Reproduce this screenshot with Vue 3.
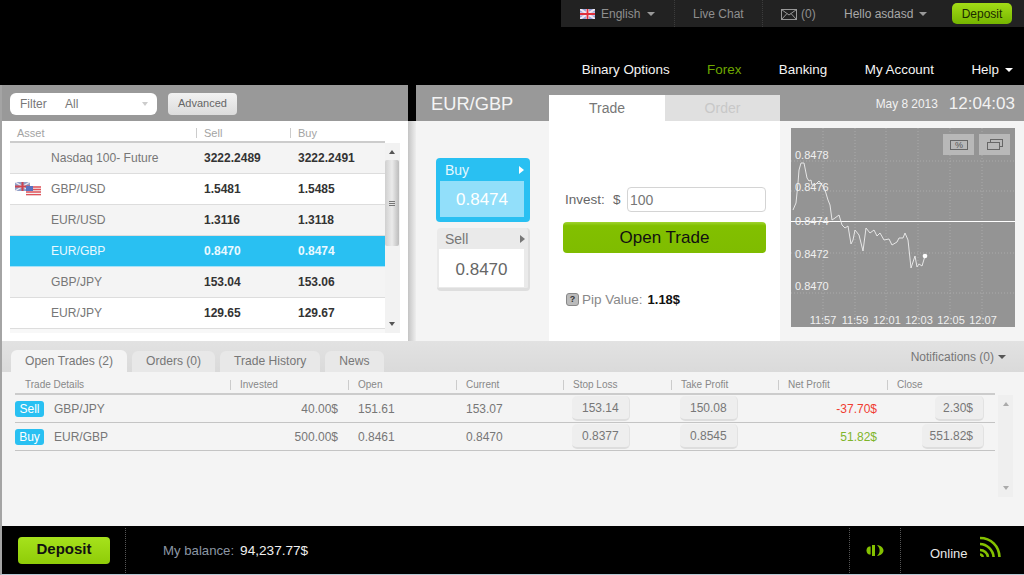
<template>
  <div class="Page">
    <div class="TopRow">
      <div class="TopBar">
        <div class="TopItem LangItem">
          <svg class="FlagUk" width="15" height="10" viewBox="0 0 15 10">
            <rect width="15" height="10" fill="#8f9fd8" />
            <path d="M0 0L15 10M15 0L0 10" stroke="#f2e6ee" stroke-width="2" />
            <path d="M7.5 0V10M0 5H15" stroke="#f2e6ee" stroke-width="3.2" />
            <path d="M7.5 0V10M0 5H15" stroke="#e0303c" stroke-width="1.8" />
          </svg>
          <span>English</span><i class="Caret"></i>
        </div>
        <div class="TopItem ChatItem">Live Chat</div>
        <div class="TopItem MailItem">
          <svg width="16" height="11" viewBox="0 0 16 11" fill="none" stroke="#999">
            <rect x="0.5" y="0.5" width="15" height="10" />
            <path d="M0.5 0.5L8 6L15.5 0.5M0.5 10.5L6 4.5M15.5 10.5L10 4.5" />
          </svg>
          <span>(0)</span>
        </div>
        <div class="TopItem HelloItem"><span>Hello asdasd</span><i class="Caret"></i></div>
        <a href="javascript:;" class="TopDeposit">Deposit</a>
      </div>
    </div>
    <nav class="MainNav">
      <a href="javascript:;" v-for="item in navItems" v-bind:key="item" v-bind:class="{ Active: item == 'Forex' }">{{ item }}</a>
      <a href="javascript:;" class="HelpLink">Help<i class="Caret White"></i></a>
    </nav>

    <div class="Workspace">
      <div class="UpperRow">
        <section class="AssetPanel">
          <div class="FilterBar">
            <div class="FilterBox"><span class="FilterLabel">Filter</span><span>All</span><i class="Caret Pale"></i></div>
            <a href="javascript:;" class="AdvancedBtn">Advanced</a>
          </div>
          <div class="AssetBody">
            <div class="AssetHead">
              <span class="ColName">Asset</span>
              <span class="ColPrice Sep">Sell</span>
              <span class="ColPrice Sep">Buy</span>
            </div>
            <div class="AssetScrollWrap">
              <div class="AssetList">
                <div class="AssetRow" v-for="row in assets" v-bind:key="row.name" v-bind:class="{ Picked: row.name == 'EUR/GBP' }">
                  <span class="ColName">
                    <svg v-if="row.flags" class="PairFlags" width="27" height="14" viewBox="0 0 27 14">
                      <rect x="0" y="0" width="15" height="9" fill="#8f9fc8" />
                      <path d="M0 0L15 9M15 0L0 9" stroke="#f0e8ee" stroke-width="1.4" />
                      <path d="M7.5 0V9M0 4.5H15" stroke="#cc4450" stroke-width="2" />
                      <rect x="11" y="4" width="15" height="10" fill="#f4f0f0" />
                      <path d="M11 5H26M11 7.5H26M11 10H26M11 12.6H26" stroke="#e0525a" stroke-width="1.3" />
                      <rect x="11" y="4" width="7" height="5" fill="#5a72c0" />
                    </svg>
                    {{ row.name }}
                  </span>
                  <span class="ColPrice">{{ row.sell }}</span>
                  <span class="ColPrice">{{ row.buy }}</span>
                </div>
              </div>
              <div class="ScrollTrack">
                <i class="ArrowUp"></i>
                <div class="ScrollThumb"><b></b><b></b><b></b></div>
                <i class="ArrowDown"></i>
              </div>
            </div>
          </div>
        </section>

        <div class="PanelGap"></div>

        <section class="TradePanel">
          <div class="TradeHead">
            <h2 class="PairTitle">EUR/GBP</h2>
            <div class="TradeTabs">
              <a href="javascript:;" class="TradeTab Current">Trade</a>
              <a href="javascript:;" class="TradeTab">Order</a>
            </div>
            <div class="ClockBox"><span class="DateText">May 8 2013</span><span class="TimeText">12:04:03</span></div>
          </div>
          <div class="TradeBody">
            <div class="SideCol">
              <div class="QuoteCard BuyCard">
                <div class="QuoteTop"><span>Buy</span><i class="ArrowRight"></i></div>
                <div class="QuoteVal">0.8474</div>
              </div>
              <div class="QuoteCard SellCard">
                <div class="QuoteTop"><span>Sell</span><i class="ArrowRight"></i></div>
                <div class="QuoteVal">0.8470</div>
              </div>
            </div>
            <div class="FormCol">
              <div class="InvestRow">
                <span class="InvestLabel">Invest:</span><span class="Dollar">$</span>
                <input type="text" class="InvestInput" value="100">
              </div>
              <a href="javascript:;" class="OpenBtn">Open Trade</a>
              <div class="PipRow">
                <span class="PipHelp">?</span><span class="PipLabel">Pip Value:</span><b>1.18$</b>
              </div>
            </div>
            <div class="ChartCol">
              <div class="Chart">
                <svg class="ChartSvg" width="225" height="198" viewBox="0 0 225 198">
                  <g stroke="#aaa" stroke-dasharray="1 2" stroke-width="1">
                    <path v-for="x in gridX" v-bind:key="'x' + x" v-bind:d="'M' + x + ' 0V198'" />
                    <path v-for="y in gridY" v-bind:key="'y' + y" v-bind:d="'M0 ' + y + 'H225'" />
                  </g>
                  <path d="M0 93.500H225" stroke="#fff" stroke-width="1" />
                  <path fill="none" stroke="#e6e6e6" stroke-width="1" d="M2 82L5 75L7 55L8 42L10 35L13 35L16 50L18 53L20 52L21 57L24 57L28 53L31 57L34 62L37 72L39 77L41 92L44 90L48 87L51 97L54 100L57 98L60 116L62 112L64 102L68 107L72 123L75 100L79 105L83 102L86 108L89 105L93 112L98 111L101 117L106 114L108 110L112 110L114 105L117 112L120 140L122 134L124 128L126 139L128 136L131 138L134 128" />
                  <circle cx="134" cy="128" r="2.300" fill="#fff" />
                </svg>
                <span class="PriceTick" v-for="tick in priceTicks" v-bind:key="tick.label" v-bind:style="{ top: tick.top + 'px' }">{{ tick.label }}</span>
                <div class="ChartBtns">
                  <span class="ChartBtn">
                    <svg width="18" height="10" viewBox="0 0 18 10"><rect x="0.5" y="0.5" width="17" height="9" fill="none" stroke="#666" /><text x="9" y="8" text-anchor="middle" font-size="9" font-family="Liberation Sans, sans-serif" fill="#555">%</text></svg>
                  </span>
                  <span class="ChartBtn">
                    <svg width="16" height="11" viewBox="0 0 16 11" fill="none" stroke="#666"><rect x="3.5" y="0.5" width="12" height="7" /><rect x="0.5" y="3.5" width="12" height="7" fill="#b8b8b8" /></svg>
                  </span>
                </div>
                <div class="TimeAxis"><span v-for="t in timeTicks" v-bind:key="t">{{ t }}</span></div>
              </div>
            </div>
          </div>
        </section>
      </div>

      <section class="TradesPanel">
        <div class="TabsRow">
          <a href="javascript:;" class="LowerTab Current">Open Trades (2)</a>
          <a href="javascript:;" class="LowerTab">Orders (0)</a>
          <a href="javascript:;" class="LowerTab">Trade History</a>
          <a href="javascript:;" class="LowerTab">News</a>
          <span class="Notify">Notifications (0)<i class="Caret Dark"></i></span>
        </div>
        <div class="TradesBody">
          <div class="TradesMain">
            <div class="TradesGrid TradesHead">
              <span>Trade Details</span>
              <span class="Sep">Invested</span>
              <span class="Sep">Open</span>
              <span class="Sep">Current</span>
              <span class="Sep">Stop Loss</span>
              <span class="Sep">Take Profit</span>
              <span class="Sep">Net Profit</span>
              <span class="Sep">Close</span>
            </div>
            <div class="TradesGrid TradeRow" v-for="trade in trades" v-bind:key="trade.pair">
              <span class="DetailCell"><em class="SideTag">{{ trade.side }}</em>{{ trade.pair }}</span>
              <span class="NumRight">{{ trade.invested }}</span>
              <span class="NumLeft">{{ trade.open }}</span>
              <span class="NumLeft">{{ trade.current }}</span>
              <span class="BtnCell"><a href="javascript:;" class="ValBtn">{{ trade.stop }}</a></span>
              <span class="BtnCell"><a href="javascript:;" class="ValBtn">{{ trade.take }}</a></span>
              <span class="NumRight" v-bind:class="trade.net < 0 ? 'Loss' : 'Gain'">{{ trade.netText }}</span>
              <span class="BtnCell CloseCell"><a href="javascript:;" class="ValBtn">{{ trade.close }}</a></span>
            </div>
          </div>
          <div class="TradesScroll"><i class="ArrowUp Light"></i><i class="ArrowDown Light"></i></div>
        </div>
      </section>
    </div>

    <footer class="BottomBar">
      <div class="BottomCell DepositCell"><a href="javascript:;" class="BigDeposit">Deposit</a></div>
      <div class="BalanceCell"><span class="BalanceLabel">My balance:</span><span class="BalanceVal">94,237.77$</span></div>
      <div class="BottomCell SoundCell">
        <svg width="18" height="13" viewBox="0 0 18 13" fill="#84c100">
          <path d="M3 2.500H4.600V10.500H3C1 9.500 0.500 8 0.500 6.500S1 3.500 3 2.500Z" />
          <path d="M6 1H9V12H6Z" />
          <path d="M11 1C15 1.500 17.500 4 17.500 6.500S15 11.500 11 12C13 10 13.600 8.400 13.600 6.500S13 3 11 1Z" />
        </svg>
      </div>
      <div class="OnlineCell">
        <span class="OnlineText">Online</span>
        <svg class="WifiIcon" width="21" height="21" viewBox="0 0 21 21" fill="none" stroke="#84c100" stroke-width="2.6">
          <path d="M0 2C11 2 19 10 19.500 21" />
          <path d="M0 8C7 8 13 14 13.600 21" />
          <path d="M0 14C4 14 7.500 17 8 21" />
          <path d="M0 18.500C1.500 18.500 2.500 19.500 2.800 21" />
        </svg>
      </div>
    </footer>
  </div>
</template>

<script setup>
  const navItems = ['Binary Options', 'Forex', 'Banking', 'My Account'];
  const assets = [
    { name: 'Nasdaq 100- Future', sell: '3222.2489', buy: '3222.2491' },
    { name: 'GBP/USD', sell: '1.5481', buy: '1.5485', flags: true },
    { name: 'EUR/USD', sell: '1.3116', buy: '1.3118' },
    { name: 'EUR/GBP', sell: '0.8470', buy: '0.8474' },
    { name: 'GBP/JPY', sell: '153.04', buy: '153.06' },
    { name: 'EUR/JPY', sell: '129.65', buy: '129.67' }
  ];
  const gridX = [32, 64, 95, 127, 159, 191];
  const gridY = [33, 63, 125, 165];
  const priceTicks = [
    { label: '0.8478', top: 21 },
    { label: '0.8476', top: 53 },
    { label: '0.8474', top: 87 },
    { label: '0.8472', top: 120 },
    { label: '0.8470', top: 152 }
  ];
  const timeTicks = ['11:57', '11:59', '12:01', '12:03', '12:05', '12:07'];
  const trades = [
    { side: 'Sell', pair: 'GBP/JPY', invested: '40.00$', open: '151.61', current: '153.07', stop: '153.14', take: '150.08', net: -37.7, netText: '-37.70$', close: '2.30$' },
    { side: 'Buy', pair: 'EUR/GBP', invested: '500.00$', open: '0.8461', current: '0.8470', stop: '0.8377', take: '0.8545', net: 51.82, netText: '51.82$', close: '551.82$' }
  ];
</script>

<style>
  html, body {
    margin: 0;
    background: #000;
  }
</style>

<style scoped>
  * {
    box-sizing: border-box;
  }
  a {
    text-decoration: none;
    color: inherit;
  }
  .Page {
    width: 1024px;
    height: 575px;
    overflow: hidden;
    background: #000;
    font-family: "Liberation Sans", Arial, sans-serif;
    font-size: 12px;
    color: #666;
    display: flex;
    flex-direction: column;
  }
  .Caret {
    display: inline-block;
    width: 0;
    height: 0;
    border-left: 4px solid transparent;
    border-right: 4px solid transparent;
    border-top: 4px solid #999;
    margin-left: 7px;
    vertical-align: 2px;
  }
  .Caret.White {
    border-top-color: #fff;
    margin-left: 6px;
  }
  .Caret.Pale {
    border-left-width: 3px;
    border-right-width: 3px;
    border-top-color: #ccc;
    margin-left: auto;
  }
  .Caret.Dark {
    border-top-color: #555;
    margin-left: 4px;
  }
  .TopRow {
    height: 27px;
    display: flex;
    justify-content: flex-end;
  }
  .TopBar {
    width: 463px;
    height: 27px;
    background: #222;
    display: flex;
    align-items: center;
    color: #8f8f8f;
    font-size: 12px;
  }
  .TopItem {
    height: 27px;
    padding-top: 1px;
    display: flex;
    align-items: center;
    border-right: 1px dotted #3c3c3c;
  }
  .LangItem {
    width: 114px;
    padding-left: 19px;
  }
  .FlagUk {
    margin-right: 6px;
  }
  .ChatItem {
    width: 88px;
    padding-left: 18px;
  }
  .MailItem {
    width: 81px;
    padding-left: 18px;
    border-right: 0;
    gap: 4px;
  }
  .HelloItem {
    width: 108px;
    color: #a8a8a8;
    border-right: 0;
  }
  .HelloItem .Caret {
    margin-left: 6px;
  }
  .TopDeposit {
    width: 60px;
    height: 21px;
    border-radius: 5px;
    background: linear-gradient(#a3dc16, #75b500);
    color: #1c2a00;
    text-align: center;
    line-height: 22px;
  }
  .MainNav {
    height: 58px;
    display: flex;
    justify-content: flex-end;
    align-items: flex-end;
    padding: 0 11px 7px 0;
    color: #f4f4f4;
    font-size: 13.4px;
    line-height: 16px;
    gap: 37.500px;
  }
  .MainNav a.Active {
    color: #6fa800;
  }
  .Workspace {
    height: 441px;
    border-left: 2px solid #a4a4a4;
    background: #f4f4f4;
    display: flex;
    flex-direction: column;
  }
  .UpperRow {
    height: 256px;
    display: flex;
  }
  .AssetPanel {
    width: 406px;
    display: flex;
    flex-direction: column;
  }
  .PanelGap {
    width: 8px;
    background: linear-gradient(#000, #000) top / 100% 36px no-repeat, linear-gradient(90deg, #c4c4c4, #eee);
  }
  .FilterBar {
    height: 36px;
    background: #999;
    display: flex;
    align-items: center;
    padding: 1px 0 0 8px;
    gap: 11px;
  }
  .FilterBox {
    width: 147px;
    height: 22px;
    background: #fff;
    border-radius: 6px;
    padding: 0 9px 0 10px;
    display: flex;
    align-items: center;
    color: #777;
  }
  .FilterLabel {
    width: 45px;
  }
  .AdvancedBtn {
    width: 69px;
    height: 22px;
    border-radius: 4px;
    background: linear-gradient(#f2f2f2, #dcdcdc);
    text-align: center;
    line-height: 21px;
    font-size: 11px;
    color: #666;
  }
  .AssetBody {
    height: 220px;
    background: #fff;
    padding-left: 8px;
    padding-right: 8px;
  }
  .AssetHead {
    height: 22px;
    padding-top: 3px;
    display: flex;
    align-items: center;
    color: #a3a3a3;
    font-size: 11px;
    border-bottom: 2px solid #ccc;
    width: 375px;
  }
  .AssetHead .ColName {
    width: 186px;
    padding-left: 7px;
  }
  .ColName {
    width: 187px;
    padding-left: 41px;
    position: relative;
  }
  .ColPrice {
    width: 94px;
    padding-left: 7px;
    font-weight: 700;
  }
  .AssetHead .ColPrice {
    font-weight: 400;
    padding-left: 8px;
    position: relative;
  }
  .Sep {
    position: relative;
  }
  .Sep::before {
    content: "";
    position: absolute;
    left: 0;
    top: 50%;
    margin-top: -5px;
    height: 10px;
    border-left: 1px solid #ccc;
  }
  .AssetScrollWrap {
    display: flex;
    height: 190px;
  }
  .AssetList {
    width: 375px;
    height: 190px;
    background: #f8f8f8;
  }
  .AssetRow {
    height: 31px;
    display: flex;
    align-items: center;
    font-size: 12.1px;
    background: #fff;
    color: #777;
    border-bottom: 1px solid #ddd;
  }
  .AssetRow:nth-child(odd) {
    background: #f4f4f4;
  }
  .AssetRow .ColPrice {
    font-size: 12px;
    color: #333;
  }
  .AssetRow.Picked {
    background: #29c0f2;
    color: #eaf9ff;
    border-bottom-color: #a6e2f8;
  }
  .AssetRow.Picked .ColPrice {
    color: #eaf9ff;
  }
  .PairFlags {
    position: absolute;
    left: 5px;
    top: 0;
  }
  .ScrollTrack {
    width: 15px;
    height: 190px;
    position: relative;
    background: #f2f2f2;
  }
  .ScrollThumb {
    position: absolute;
    left: 0;
    top: 17px;
    width: 14px;
    height: 86px;
    border-radius: 2px;
    background: linear-gradient(90deg, #d0d0d0, #ebebeb 50%, #bcbcbc);
    display: flex;
    flex-direction: column;
    justify-content: center;
    align-items: center;
    gap: 1px;
  }
  .ScrollThumb b {
    width: 6px;
    height: 1px;
    background: #777;
  }
  .ArrowUp, .ArrowDown {
    position: absolute;
    left: 4px;
    width: 0;
    height: 0;
    border-left: 3.5px solid transparent;
    border-right: 3.5px solid transparent;
  }
  .ArrowUp {
    top: 7px;
    border-bottom: 4px solid #555;
  }
  .ArrowDown {
    bottom: 7px;
    border-top: 4px solid #555;
  }
  .ArrowUp.Light {
    left: 5px;
    border-bottom-color: #aaa;
  }
  .ArrowDown.Light {
    left: 5px;
    border-top-color: #aaa;
  }
  .TradePanel {
    width: 608px;
    display: flex;
    flex-direction: column;
  }
  .TradeHead {
    height: 36px;
    background: #999;
    display: flex;
  }
  .PairTitle {
    margin: 0;
    width: 133px;
    padding-left: 15px;
    line-height: 38px;
    font-size: 18.3px;
    font-weight: 400;
    color: #f4f4f4;
  }
  .TradeTabs {
    display: flex;
    align-items: flex-end;
    height: 36px;
  }
  .TradeTab {
    width: 116px;
    height: 26px;
    line-height: 26px;
    text-align: center;
    font-size: 14px;
    background: #e0e0e0;
    color: #c8c8c8;
  }
  .TradeTab.Current {
    background: #fff;
    color: #777;
  }
  .TradeTab + .TradeTab {
    width: 115px;
  }
  .ClockBox {
    margin-left: auto;
    padding: 1px 9px 0 0;
    display: flex;
    align-items: center;
    gap: 11px;
    color: #f2f2f2;
    height: 36px;
  }
  .DateText {
    font-size: 11.9px;
  }
  .TimeText {
    font-size: 17px;
  }
  .TradeBody {
    flex: 1;
    display: flex;
    background: #f4f4f4;
  }
  .SideCol {
    width: 133px;
    padding: 37px 0 0 20px;
  }
  .QuoteCard {
    width: 94px;
    border-radius: 4px;
  }
  .QuoteTop {
    height: 23px;
    display: flex;
    align-items: center;
    justify-content: space-between;
    padding: 0 6px 0 9px;
    font-size: 14px;
  }
  .ArrowRight {
    width: 0;
    height: 0;
    border-top: 4px solid transparent;
    border-bottom: 4px solid transparent;
    border-left: 5px solid #fff;
  }
  .QuoteVal {
    margin: 0 6px 0 4px;
    height: 36px;
    line-height: 38px;
    text-align: center;
    font-size: 17px;
  }
  .BuyCard {
    height: 64px;
    background: #29c0f2;
    color: #e4f7fe;
  }
  .BuyCard .QuoteVal {
    background: #92dffa;
    color: #fff;
  }
  .SellCard {
    margin: 6px 0 0 1px;
    width: 93px;
    height: 63px;
    background: #eaeaea;
    color: #777;
    border-bottom: 3px solid #dedede;
    border-right: 2px solid #dedede;
  }
  .SellCard .QuoteVal {
    background: #fff;
    margin: 0 4px 0 2px;
    height: 38px;
    line-height: 41px;
    color: #666;
  }
  .SellCard .ArrowRight {
    border-left-color: #777;
  }
  .SellCard .QuoteTop {
    height: 21px;
    padding-right: 3px;
    padding-left: 8px;
  }
  .FormCol {
    width: 231px;
    background: #fff;
    padding: 66px 13px 0 14px;
  }
  .InvestRow {
    display: flex;
    align-items: center;
    height: 25px;
    padding-left: 2px;
    font-size: 13.5px;
  }
  .InvestLabel {
    width: 48px;
  }
  .Dollar {
    width: 14px;
    color: #666;
  }
  .InvestInput {
    width: 139px;
    height: 25px;
    border: 1px solid #d4d4d4;
    border-radius: 4px;
    padding: 0 2px;
    font: 14px "Liberation Sans", Arial, sans-serif;
    color: #777;
    outline: none;
  }
  .OpenBtn {
    display: block;
    width: 203px;
    height: 31px;
    margin-top: 10px;
    border-radius: 4px;
    background: linear-gradient(#a0d430, #82c000 12%, #7fbc00);
    color: #111;
    text-align: center;
    line-height: 32px;
    font-size: 17px;
  }
  .PipRow {
    margin-top: 39px;
    padding-left: 3px;
    display: flex;
    align-items: center;
    font-size: 13.5px;
    color: #888;
  }
  .PipRow b {
    color: #111;
    font-size: 13px;
    margin-left: 5px;
  }
  .PipHelp {
    width: 13px;
    height: 13px;
    border-radius: 3px;
    background: #bbb;
    border: 1px solid #888;
    color: #333;
    text-align: center;
    font-size: 9px;
    line-height: 11px;
    font-weight: 700;
    margin-right: 3px;
  }
  .ChartCol {
    flex: 1;
    padding: 7px 0 0 11px;
  }
  .Chart {
    width: 224px;
    height: 199px;
    background: #949494;
    position: relative;
    overflow: hidden;
  }
  .ChartSvg {
    display: block;
  }
  .PriceTick {
    position: absolute;
    left: 4px;
    font-size: 11px;
    line-height: 13px;
    color: #f0f0f0;
  }
  .ChartBtns {
    position: absolute;
    top: 6px;
    right: 5px;
    display: flex;
    gap: 5px;
  }
  .ChartBtn {
    width: 31px;
    height: 21px;
    background: #b8b8b8;
    display: flex;
    align-items: center;
    justify-content: center;
  }
  .TimeAxis {
    position: absolute;
    left: 16px;
    bottom: 1px;
    height: 12px;
    display: flex;
    color: #f0f0f0;
    font-size: 11px;
    line-height: 12px;
  }
  .TimeAxis span {
    width: 32px;
    text-align: center;
  }
  .TradesPanel {
    flex: 1;
    background: #f4f4f4;
    display: flex;
    flex-direction: column;
  }
  .TabsRow {
    height: 31px;
    background: linear-gradient(#e2e2e2, #dadada);
    display: flex;
    align-items: flex-end;
    padding-left: 9px;
    gap: 5px;
    font-size: 12.1px;
  }
  .LowerTab {
    height: 21px;
    padding: 0 14px;
    line-height: 21px;
    border-radius: 6px 6px 0 0;
    background: #e8e8e8;
    color: #777;
  }
  .LowerTab.Current {
    width: 116px;
    padding: 0;
    text-align: center;
    height: 22px;
    line-height: 23px;
    background: #f4f4f4;
  }
  .Notify {
    margin-left: auto;
    padding-right: 18px;
    height: 31px;
    line-height: 33px;
    color: #777;
    font-size: 12px;
  }
  .TradesBody {
    display: flex;
    flex: 1;
    padding-left: 13px;
  }
  .TradesMain {
    width: 980px;
  }
  .TradesGrid {
    display: grid;
    grid-template-columns: 215px 118px 108px 107px 108px 107px 109px 108px;
    align-items: center;
  }
  .TradesHead {
    height: 23px;
    padding-top: 4px;
    border-bottom: 2px solid #ccc;
    font-size: 10px;
    color: #888;
  }
  .TradesHead span {
    padding-left: 10px;
  }
  .TradeRow {
    height: 28px;
    border-bottom: 1px solid #c4c4c4;
    color: #777;
    font-size: 12px;
  }
  .DetailCell {
    display: flex;
    align-items: center;
    font-size: 12px;
  }
  .SideTag {
    width: 29px;
    height: 16px;
    margin-right: 10px;
    border-radius: 3px;
    background: #29c0f2;
    color: #fff;
    font-style: normal;
    text-align: center;
    line-height: 16px;
  }
  .NumRight {
    text-align: right;
    padding-right: 10px;
  }
  .NumLeft {
    padding-left: 10px;
  }
  .Loss {
    color: #f03c32;
  }
  .Gain {
    color: #7fb52a;
  }
  .BtnCell {
    display: flex;
    padding-left: 9px;
  }
  .ValBtn {
    height: 25px;
    line-height: 24px;
    padding: 0 10px;
    border-radius: 5px;
    background: #eee;
    border-bottom: 2px solid #ddd;
    border-right: 1px solid #e2e2e2;
  }
  .CloseCell {
    justify-content: flex-end;
    padding: 0 11px 0 0;
  }
  .CloseCell .ValBtn {
    padding-left: 8px;
  }
  .TradesScroll {
    position: relative;
    width: 15px;
    height: 102px;
    margin: 23px 0 0 3px;
    background: #efefef;
  }
  .BottomBar {
    height: 49px;
    border-left: 2px solid #a4a4a4;
    border-bottom: 1px solid #b8c8d4;
    background: #000;
    display: flex;
    align-items: center;
  }
  .BottomCell {
    height: 45px;
    display: flex;
    align-items: center;
  }
  .DepositCell {
    width: 124px;
    padding-left: 16px;
    border-right: 1px dotted #555;
  }
  .BigDeposit {
    width: 92px;
    height: 27px;
    border-radius: 4px;
    background: linear-gradient(#a6e21c, #8fcc08);
    color: #111;
    font-size: 15px;
    font-weight: 700;
    text-align: center;
    line-height: 24px;
  }
  .BalanceCell {
    width: 723px;
    padding-left: 37px;
    font-size: 13.200px;
  }
  .BalanceLabel {
    color: #8c97a4;
    margin-right: 6px;
  }
  .BalanceVal {
    color: #f0f0f0;
    font-size: 13.6px;
  }
  .SoundCell {
    width: 52px;
    justify-content: center;
    border-left: 1px dotted #555;
    border-right: 1px dotted #555;
  }
  .OnlineCell {
    flex: 1;
    display: flex;
    align-items: flex-start;
    padding-left: 29px;
    gap: 12px;
    color: #e8e8e8;
    font-size: 13px;
    height: 48px;
  }
  .OnlineText {
    margin-top: 20px;
  }
  .WifiIcon {
    margin-top: 10px;
  }
</style>
